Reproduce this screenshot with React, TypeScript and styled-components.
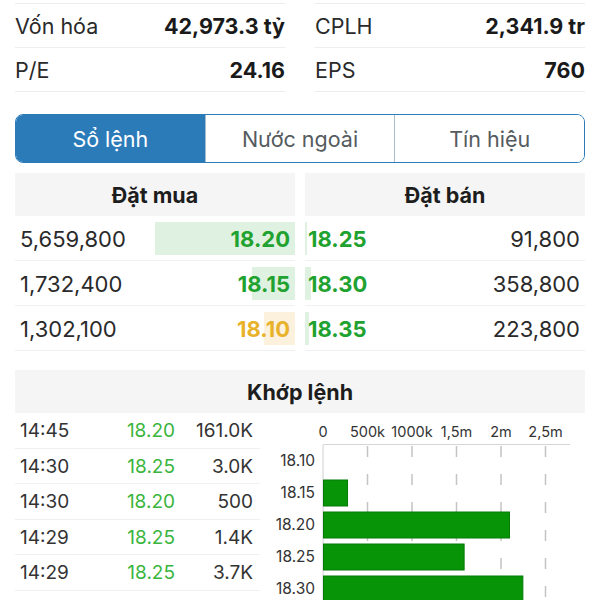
import styled, { createGlobalStyle } from 'styled-components';

const GlobalStyle = createGlobalStyle`
  html, body {
    margin: 0;
    padding: 0;
    background: #fff;
    overflow: hidden;
  }
  body {
    font-family: Inter, "Liberation Sans", sans-serif;
    color: #222;
  }
`;

type Stat = { label: string; value: string };
type BookRow = { qty: string; price: string; bar: number; tone: 'up' | 'ref' };
type Trade = { time: string; price: string; vol: string };

const stats: Stat[][] = [
  [
    { label: 'Vốn hóa', value: '42,973.3 tỷ' },
    { label: 'P/E', value: '24.16' },
  ],
  [
    { label: 'CPLH', value: '2,341.9 tr' },
    { label: 'EPS', value: '760' },
  ],
];

const bids: BookRow[] = [
  { qty: '5,659,800', price: '18.20', bar: 140, tone: 'up' },
  { qty: '1,732,400', price: '18.15', bar: 43, tone: 'up' },
  { qty: '1,302,100', price: '18.10', bar: 31, tone: 'ref' },
];

const asks: BookRow[] = [
  { qty: '91,800', price: '18.25', bar: 2, tone: 'up' },
  { qty: '358,800', price: '18.30', bar: 6, tone: 'up' },
  { qty: '223,800', price: '18.35', bar: 4, tone: 'up' },
];

const trades: Trade[] = [
  { time: '14:45', price: '18.20', vol: '161.0K' },
  { time: '14:30', price: '18.25', vol: '3.0K' },
  { time: '14:30', price: '18.20', vol: '500' },
  { time: '14:29', price: '18.25', vol: '1.4K' },
  { time: '14:29', price: '18.25', vol: '3.7K' },
];

const volumes = [
  { price: '18.10', vol: 0 },
  { price: '18.15', vol: 0.27 },
  { price: '18.20', vol: 2.09 },
  { price: '18.25', vol: 1.58 },
  { price: '18.30', vol: 2.24 },
];

const Page = styled.div`
  width: 600px;
  height: 600px;
  box-sizing: border-box;
  padding: 3px 15px 0;
  overflow: hidden;
`;

const StatGrid = styled.div`
  display: grid;
  grid-template-columns: 270px 270px;
  column-gap: 30px;
`;

const StatColumn = styled.div`
  border-top: 1px solid #eeeeee;
`;

const StatRow = styled.div`
  display: flex;
  justify-content: space-between;
  align-items: center;
  height: 43px;
  border-bottom: 1px solid #eeeeee;
`;

const StatLabel = styled.span`
  font-size: 21.5px;
  color: #2a2a2a;
`;

const StatValue = styled.span`
  font-size: 21.5px;
  font-weight: 700;
  color: #1a1a1a;
`;

const Tabs = styled.div`
  display: flex;
  margin-top: 22px;
  height: 49px;
  box-sizing: border-box;
  border: 1.5px solid #2b7bb9;
  border-radius: 8px;
  overflow: hidden;
`;

const Tab = styled.div<{ $active?: boolean }>`
  flex: 1;
  display: flex;
  align-items: center;
  justify-content: center;
  font-size: 21.5px;
  color: ${(p) => (p.$active ? '#fff' : '#555b60')};
  background: ${(p) => (p.$active ? '#2b7bb9' : '#fff')};
  & + & {
    border-left: 1px solid #a9bccb;
  }
`;

const Book = styled.div`
  display: grid;
  grid-template-columns: 280px 280px;
  column-gap: 10px;
  margin-top: 10px;
`;

const SectionHeader = styled.div`
  height: 43px;
  display: flex;
  align-items: center;
  justify-content: center;
  background: #f5f5f5;
  font-size: 21.5px;
  font-weight: 700;
  color: #1d1d1d;
`;

const BookRowBox = styled.div<{ $side: 'bid' | 'ask' }>`
  position: relative;
  height: 45px;
  box-sizing: border-box;
  display: flex;
  align-items: center;
  justify-content: space-between;
  padding: ${(p) => (p.$side === 'bid' ? '1px 5px 0 5px' : '1px 5px 0 3px')};
  border-bottom: 1px solid #f0f0f0;
`;

const DepthBar = styled.div<{ $side: 'bid' | 'ask'; $tone: 'up' | 'ref' }>`
  position: absolute;
  top: 6px;
  bottom: 5px;
  ${(p) => (p.$side === 'bid' ? 'right: 0;' : 'left: 0;')}
  background: ${(p) => (p.$tone === 'ref' ? '#fcf1dc' : '#dff1e0')};
`;

const Qty = styled.span`
  position: relative;
  font-size: 22px;
  color: #2a2a2a;
`;

const Price = styled.span<{ $tone: 'up' | 'ref' }>`
  position: relative;
  font-size: 22px;
  font-weight: 700;
  color: ${(p) => (p.$tone === 'ref' ? '#e8b22a' : '#1fa22f')};
`;

const MatchSection = styled.div`
  margin-top: 19px;
`;

const MatchBody = styled.div`
  display: grid;
  grid-template-columns: 245px 1fr;
  column-gap: 10px;
`;

const TradeTable = styled.div`
  display: flex;
  flex-direction: column;
`;

const TradeRow = styled.div`
  display: grid;
  grid-template-columns: 100px 55px 1fr;
  align-items: center;
  height: 35.5px;
  box-sizing: border-box;
  padding: 1px 7px 0 5px;
  border-bottom: 1px solid #f0f0f0;
  font-size: 19px;
  color: #333;
`;

const TradePrice = styled.span`
  text-align: right;
  color: #3ab53d;
`;

const TradeVol = styled.span`
  text-align: right;
`;

const Chart = styled.svg`
  display: block;
  font-family: Inter, "Liberation Sans", sans-serif;
`;

const X0 = 53;
const PER_M = 89;

const VolumeChart = () => {
  const ticks = [
    { v: 0, label: '0' },
    { v: 0.5, label: '500k' },
    { v: 1, label: '1000k' },
    { v: 1.5, label: '1,5m' },
    { v: 2, label: '2m' },
    { v: 2.5, label: '2,5m' },
  ];
  return (
    <Chart width={315} height={190} viewBox="0 0 315 190">
      {ticks.map((t) => (
        <text
          key={t.label}
          x={X0 + t.v * PER_M}
          y={24}
          fontSize={14.5}
          fill="#333"
          textAnchor="middle"
        >
          {t.label}
        </text>
      ))}
      <line x1={X0} y1={31.5} x2={300} y2={31.5} stroke="#d6d6d6" strokeWidth={1} />
      {ticks.slice(1).map((t) => (
        <line
          key={t.label}
          x1={X0 + t.v * PER_M}
          y1={33}
          x2={X0 + t.v * PER_M}
          y2={190}
          stroke="#c4c4c4"
          strokeWidth={1.5}
          strokeDasharray="11 17"
        />
      ))}
      <line x1={X0} y1={32} x2={X0} y2={190} stroke="#d0d0d0" strokeWidth={1} />
      {volumes.map((r, i) => {
        const cy = 48 + i * 32;
        return (
          <g key={r.price}>
            <text x={45} y={cy + 5} fontSize={15.5} fill="#333" textAnchor="end">
              {r.price}
            </text>
            {r.vol > 0 && (
              <rect
                x={X0 + 0.5}
                y={cy - 13}
                width={r.vol * PER_M}
                height={26}
                fill="#079407"
                stroke="#067a06"
                strokeWidth={1}
              />
            )}
          </g>
        );
      })}
    </Chart>
  );
};

export default function App() {
  return (
    <>
      <GlobalStyle />
      <Page>
        <StatGrid>
          {stats.map((col, ci) => (
            <StatColumn key={ci}>
              {col.map((s) => (
                <StatRow key={s.label}>
                  <StatLabel>{s.label}</StatLabel>
                  <StatValue>{s.value}</StatValue>
                </StatRow>
              ))}
            </StatColumn>
          ))}
        </StatGrid>

        <Tabs>
          <Tab $active>Sổ lệnh</Tab>
          <Tab>Nước ngoài</Tab>
          <Tab>Tín hiệu</Tab>
        </Tabs>

        <Book>
          <div>
            <SectionHeader>Đặt mua</SectionHeader>
            {bids.map((b) => (
              <BookRowBox key={b.price} $side="bid">
                <DepthBar $side="bid" $tone={b.tone} style={{ width: b.bar }} />
                <Qty>{b.qty}</Qty>
                <Price $tone={b.tone}>{b.price}</Price>
              </BookRowBox>
            ))}
          </div>
          <div>
            <SectionHeader>Đặt bán</SectionHeader>
            {asks.map((a) => (
              <BookRowBox key={a.price} $side="ask">
                <DepthBar $side="ask" $tone={a.tone} style={{ width: a.bar }} />
                <Price $tone={a.tone}>{a.price}</Price>
                <Qty>{a.qty}</Qty>
              </BookRowBox>
            ))}
          </div>
        </Book>

        <MatchSection>
          <SectionHeader>Khớp lệnh</SectionHeader>
          <MatchBody>
            <TradeTable>
              {trades.map((t, i) => (
                <TradeRow key={i}>
                  <span>{t.time}</span>
                  <TradePrice>{t.price}</TradePrice>
                  <TradeVol>{t.vol}</TradeVol>
                </TradeRow>
              ))}
            </TradeTable>
            <VolumeChart />
          </MatchBody>
        </MatchSection>
      </Page>
    </>
  );
}
